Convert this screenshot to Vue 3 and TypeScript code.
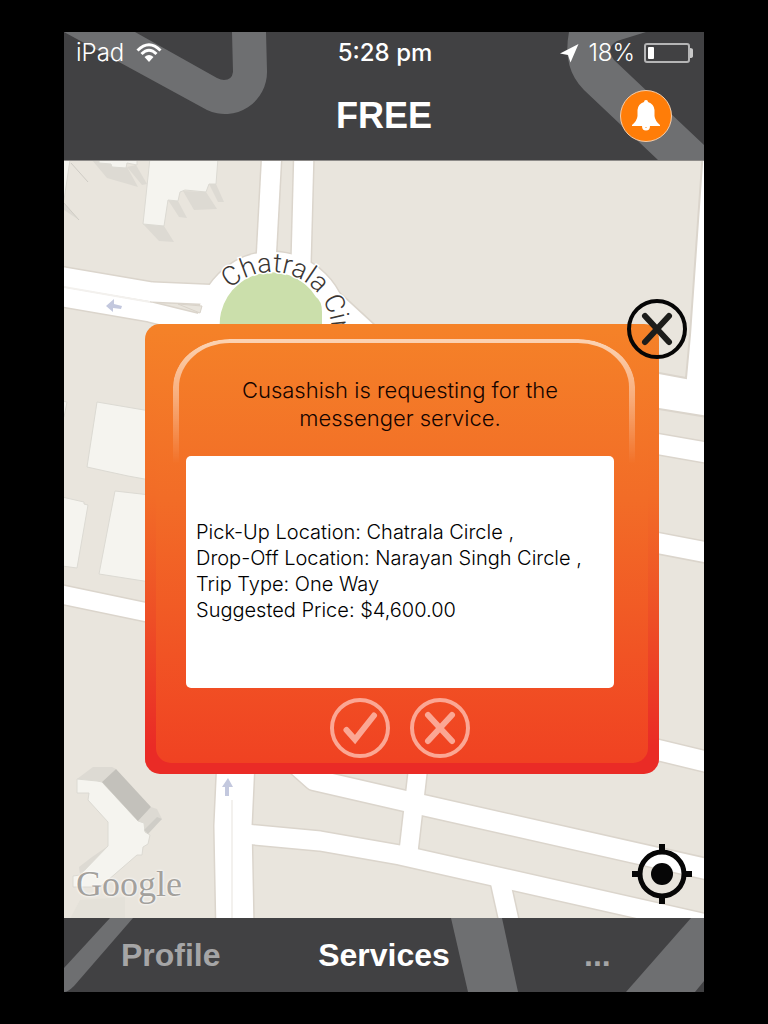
<script setup lang="ts">
import { ref } from 'vue'

interface Road {
  points: string
  width: number
}

const roads: Road[] = [
  { points: '272,150 266,262', width: 19 },
  { points: '304,150 301,264', width: 19 },
  { points: '50,275 64,277 152,292 222,295', width: 19 },
  { points: '50,295 64,297 150,312 240,334', width: 19 },
  { points: '308,284 334,306 384,352', width: 26 },
  { points: '600,434 720,455', width: 20 },
  { points: '600,532 720,555', width: 20 },
  { points: '600,736 720,765', width: 20 },
  { points: '50,592 64,595 150,613', width: 18 },
  { points: '236,760 233,826 235,930', width: 37 },
  { points: '296,764 314,780 427,806 720,872', width: 20 },
  { points: '245,834 320,841 400,855 720,927', width: 19 },
  { points: '419,760 408,856', width: 18 },
  { points: '499,876 511,930', width: 19 },
]

const whiteBlocks: string[] = [
  '150,158 143,224 164,226 168,200 178,201 180,192 185,190 206,192 209,184 216,184 218,158',
  '99,158 99,163 111,164 112,167 126,168 127,163 137,165 137,158',
  '62,158 70,160 64,200 62,200',
  '97,402 150,411 150,480 128,476 105,471 87,467',
  '115,491 150,495 150,582 99,574',
  '62,497 84,502 84,504 88,505 77,568 62,566',
  '62,401 67,402 64,417 62,417',
  '77,779 97,781 102,782 138,821 144,823 145,832 150,835 148,844 143,847 142,855 137,855 100,887 73,887 73,876 80,875 108,846 108,822 88,800 89,793 77,793',
]

const shades: string[] = [
  '143,224 164,226 174,242 159,241',
  '168,200 178,201 187,218 179,217',
  '183,191 206,192 217,209 194,210',
  '209,184 216,184 224,202 218,202',
  '92,160 107,178 138,187 127,167',
  '127,167 136,165 147,184 142,185',
  '64,203 79,220 76,218 64,210',
  '77,779 93,767 112,767 116,769 102,782',
  '138,821 151,807 157,809 162,819 144,830',
  '79,867 92,857 108,846 80,875',
]

const details: string[] = [
  'Pick-Up Location: Chatrala Circle ,',
  'Drop-Off Location: Narayan Singh Circle ,',
  'Trip Type: One Way',
  'Suggested Price: $4,600.00',
]

const tabs: string[] = ['Profile', 'Services', '...']
const activeTab = ref('Services')
</script>

<template>
  <main class="screen">
    <div class="device">
      <header class="top">
        <svg class="backdrop" viewBox="0 0 640 128" preserveAspectRatio="xMidYMid slice" aria-hidden="true">
          <path d="M0 0L143 78A42 42 0 0 0 203 39L202 0H168L169 40Q168 48 160 48Q157 48 153 46L71 0Z" />
          <path d="M505 0Q498 36 520 58L594 128H640V113L550 28Q541 16 553 9L582 0Z" />
        </svg>
        <div class="status">
          <div class="status-side">
            <span class="thin">iPad</span>
            <svg class="wifi" width="26" height="20" viewBox="0 0 26 20" aria-hidden="true">
              <path d="M1.500 7.500Q13-4 24.500 7.500" />
              <path d="M5.500 11Q13 3.500 20.500 11" />
              <path class="solid" d="M8.500 14Q13 10 17.500 14L13 19Z" />
            </svg>
          </div>
          <span class="clock">5:28 pm</span>
          <div class="status-side end">
            <svg class="arrow" width="19" height="19" viewBox="0 0 19 19" aria-hidden="true">
              <path d="M18.500 0L10.500 18.500L8 11L0 9.500Z" />
            </svg>
            <span class="thin">18%</span>
            <svg width="50" height="20" viewBox="0 0 50 20" aria-hidden="true">
              <rect x="1" y="1" width="44" height="18" rx="2" fill="none" stroke="#b5b5b6" stroke-width="2" />
              <rect x="4" y="4" width="6" height="12" rx="1" fill="#fff" />
              <path d="M46 5Q49 5 49 7V13Q49 15 46 15Z" fill="#c8c8c8" />
            </svg>
          </div>
        </div>
        <div class="title-row">
          <h1>FREE</h1>
          <button class="bell" type="button" aria-label="Notifications">
            <svg width="52" height="52" viewBox="0 0 52 52" aria-hidden="true">
              <circle cx="26" cy="26" r="25.500" fill="#ff7d08" stroke="#f5cdaa" />
              <path
                fill="#fff"
                d="M26 10Q28 10 28 12Q34 14 34.500 20V26Q35 31 40 35V36H30Q30 40.500 26 40.500Q22 40.500 22 36H12V35Q17 31 17.500 26V20Q18 14 24 12Q24 10 26 10Z"
              />
              <path d="M25 37.500H27" stroke="#ffc48f" fill="none" />
            </svg>
          </button>
        </div>
      </header>

      <section class="map" aria-label="Map">
        <svg class="backdrop" viewBox="64 161 640 757" preserveAspectRatio="xMidYMid slice" aria-hidden="true">
          <defs>
            <path id="ring-label" d="M230 289A60 60 0 1 1 273 392" />
          </defs>
          <polygon v-for="s in shades" :key="s" :points="s" fill="#dddad3" />
          <polygon points="70,919 80,900 125,897 125,919" fill="#e4e1d9" />
          <polygon v-for="b in whiteBlocks" :key="b" :points="b" fill="#f5f4ef" stroke="#dcdad3" stroke-width="1" />
          <polygon points="102,782 116,769 151,807 138,821" fill="#c3c1bb" />
          <polygon points="144,830 157,817 162,819 148,834" fill="#cfcdc7" />
          <path d="M71 163L88 182M64 203L79 220" stroke="#cfccc5" fill="none" />
          <g fill="none" stroke="#dbd5cc" stroke-linejoin="round">
            <polyline v-for="r in roads" :key="r.points" :points="r.points" :stroke-width="r.width + 3" />
            <circle cx="272" cy="327" r="62" stroke-width="29" />
          </g>
          <polygon
            points="703,150 690,335 686,378 600,362 600,399 659,409 720,419 720,150"
            fill="#fff"
            stroke="#dbd5cc"
            stroke-width="2"
          />
          <g fill="none" stroke="#fff" stroke-linejoin="round">
            <polyline v-for="r in roads" :key="r.points" :points="r.points" :stroke-width="r.width" />
            <circle cx="272" cy="327" r="62" stroke-width="26" />
          </g>
          <path d="M64 287L150 302M232 800V918" stroke="#f3f1ee" stroke-width="2" fill="none" />
          <path d="M178 304L202 306L200 313Z" fill="#e9e5dd" stroke="#d9d3ca" />
          <path d="M220 330A52 52 0 0 1 316 297Q322 301 322 312V330Z" fill="#cbdfab" />
          <g fill="#c3c8de">
            <path d="M106 306L114 299V304L122 306L121 309L113 308V312Z" />
            <path d="M228 778L233 787H229V796H225V787H222Z" />
          </g>
          <text class="road-name"><textPath href="#ring-label">Chatrala Circle</textPath></text>
        </svg>

        <span class="google">Google</span>

        <section class="dialog" role="dialog" aria-labelledby="request-title">
          <div class="panel" aria-hidden="true"></div>
          <div class="shine" aria-hidden="true"></div>
          <h2 id="request-title">Cusashish is requesting for the<br />messenger service.</h2>
          <div class="details">
            <p v-for="line in details" :key="line">{{ line }}</p>
          </div>
          <div class="actions">
            <button type="button" aria-label="Accept">
              <svg width="60" height="60" viewBox="0 0 60 60" aria-hidden="true">
                <circle cx="30" cy="30" r="28" stroke-width="4" />
                <path d="M16.500 32L25 41.500L44 17.500" stroke-width="6" />
              </svg>
            </button>
            <button type="button" aria-label="Decline">
              <svg width="60" height="60" viewBox="0 0 60 60" aria-hidden="true">
                <circle cx="30" cy="30" r="28" stroke-width="4" />
                <path d="M18 17L42 43M42 17L18 43" stroke-width="6" />
              </svg>
            </button>
          </div>
          <button class="close" type="button" aria-label="Close">
            <svg width="60" height="60" viewBox="0 0 60 60" aria-hidden="true">
              <circle cx="30" cy="30" r="28" stroke="#060606" stroke-width="4" />
              <path d="M18 17L42 43M42 17L18 43" stroke="#1d1d1b" stroke-width="6" />
            </svg>
          </button>
        </section>

        <button class="locate" type="button" aria-label="My location">
          <svg width="60" height="60" viewBox="0 0 60 60" aria-hidden="true">
            <circle cx="30" cy="30" r="22" fill="none" stroke="#060606" stroke-width="5" />
            <circle cx="30" cy="30" r="11" fill="#060606" />
            <path d="M30 0V7M30 53V60M0 30H7M53 30H60" stroke="#060606" stroke-width="6" />
          </svg>
        </button>
      </section>

      <nav class="tabs" aria-label="Main">
        <svg class="backdrop" viewBox="0 0 640 74" preserveAspectRatio="xMidYMid slice" aria-hidden="true">
          <path d="M46 0H69L10 68Q4 74 0 74V50Z" />
          <path d="M387 0H438L454 74H404Z" />
          <path d="M627 0H640V63L631 74H562Z" />
        </svg>
        <button
          v-for="tab in tabs"
          :key="tab"
          type="button"
          :class="{ active: tab === activeTab }"
          @click="activeTab = tab"
        >
          {{ tab }}
        </button>
      </nav>
    </div>
  </main>
</template>

<style>
body {
  margin: 0;
  background: #000;
}
</style>

<style scoped>
.screen {
  box-sizing: border-box;
  min-height: 100vh;
  padding: 32px 64px;
  display: flex;
  background: #000;
  font-family: "Liberation Sans", Arial, sans-serif;
}

.device {
  flex: 1;
  min-width: 0;
  display: flex;
  flex-direction: column;
}

button {
  margin: 0;
  padding: 0;
  border: 0;
  background: none;
  font: inherit;
  cursor: pointer;
}

svg {
  display: block;
}

.backdrop {
  position: absolute;
  inset: 0;
  width: 100%;
  height: 100%;
}

.top,
.tabs {
  position: relative;
  background: #414143;
}

.top > .backdrop,
.tabs > .backdrop {
  fill: #6e6f71;
}

.top {
  color: #fff;
  border-bottom: 1px solid #8d8b89;
}

.status {
  position: relative;
  display: grid;
  grid-template-columns: 1fr auto 1fr;
  align-items: center;
  height: 42px;
  padding: 0 10px 0 12px;
  font-size: 24px;
  line-height: 28px;
}

.status-side {
  display: flex;
  align-items: center;
  gap: 12px;
}

.end {
  justify-content: flex-end;
  gap: 9px;
}

.thin {
  font-family: Inter, "Liberation Sans", sans-serif;
  font-weight: 300;
}

.clock {
  font-family: Inter, "Liberation Sans", sans-serif;
  font-weight: 500;
}

.wifi {
  fill: none;
  stroke: #fff;
  stroke-width: 3;
}

.wifi .solid {
  fill: #fff;
  stroke: none;
}

.arrow {
  fill: #fff;
}

.title-row {
  position: relative;
  display: grid;
  grid-template-columns: 1fr auto 1fr;
  align-items: center;
  height: 84px;
  padding: 0 32px 2px;
}

h1 {
  grid-column: 2;
  margin: 0;
  font-size: 36px;
  line-height: 40px;
}

.bell {
  justify-self: end;
}

.map {
  position: relative;
  flex: 1;
  display: flex;
  flex-direction: column;
  padding: 163px 45px 144px 81px;
  background: #e9e5dd;
  overflow: hidden;
}

.road-name {
  font-family: Roboto, sans-serif;
  font-weight: 300;
  font-size: 27px;
  fill: #3a3633;
  stroke: #fff;
  stroke-width: 3px;
  paint-order: stroke;
}

.google {
  position: absolute;
  left: 12px;
  bottom: 12px;
  font-family: "Liberation Serif", serif;
  font-size: 36px;
  line-height: 44px;
  color: #a3a19d;
  text-shadow: 0 0 2px #fff, 0 0 3px #fff;
}

.dialog {
  position: relative;
  flex: 1;
  display: flex;
  flex-direction: column;
  box-sizing: border-box;
  padding: 52px 45px 16px 41px;
  border-radius: 15px;
  background: linear-gradient(#f58228 0%, #f26c27 38%, #ee4f26 65%, #ea2b26 94%);
}

.panel {
  position: absolute;
  inset: 0 11px 11px;
  border-radius: 15px;
  background: linear-gradient(#f58228 0%, #f26c27 40%, #f04222 100%);
}

.shine {
  position: absolute;
  top: 15px;
  left: 28px;
  right: 24px;
  height: 125px;
  box-sizing: border-box;
  border: 6px solid #fff;
  border-top-width: 4px;
  border-bottom: 0;
  border-radius: 57px 57px 0 0 / 48px 48px 0 0;
  mask-image: linear-gradient(rgba(0, 0, 0, 0.65), rgba(0, 0, 0, 0.4) 45%, transparent);
}

h2 {
  position: relative;
  margin: 0 0 24px;
  font-family: Inter, "Liberation Sans", sans-serif;
  font-weight: 300;
  font-size: 22px;
  line-height: 28px;
  text-align: center;
  color: #140400;
}

.details {
  position: relative;
  flex: 1;
  display: flex;
  flex-direction: column;
  justify-content: center;
  padding: 0 10px 2px;
  border-radius: 5px;
  background: #fff;
  font-family: Inter, "Liberation Sans", sans-serif;
  font-weight: 300;
  font-size: 20px;
  line-height: 26px;
  color: #000;
}

.details p {
  margin: 0;
}

.actions {
  position: relative;
  display: flex;
  justify-content: center;
  gap: 20px;
  margin-top: 10px;
}

.actions svg,
.close svg {
  fill: none;
  stroke-linecap: round;
}

.actions svg {
  stroke: #fba794;
}

.close {
  position: absolute;
  top: -25px;
  right: -28px;
}

.locate {
  position: absolute;
  right: 12px;
  bottom: 14px;
}

.tabs {
  display: grid;
  grid-template-columns: repeat(3, 1fr);
}

.tabs button {
  position: relative;
  height: 74px;
  font-weight: bold;
  font-size: 32px;
  line-height: 36px;
  color: #a5a5a6;
}

.tabs .active {
  color: #fff;
}
</style>
